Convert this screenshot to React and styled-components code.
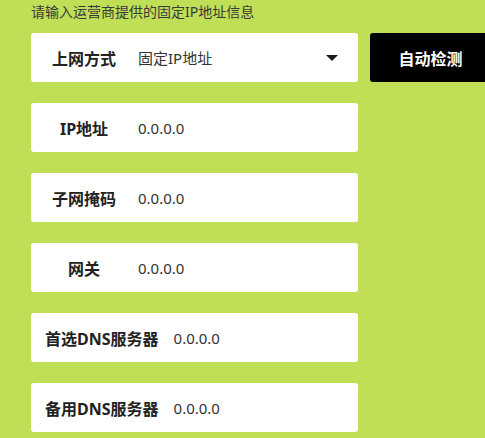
import React from "react"
import styled, { createGlobalStyle } from "styled-components"

const GlobalStyle = createGlobalStyle`
  html, body {
    margin: 0;
    padding: 0;
    overflow: hidden;
    background: #c0df57;
  }
  body {
    font-family: "Noto Sans", "Noto Sans CJK SC", sans-serif;
  }
`

const fields = [
  { label: "IP地址", value: "0.0.0.0" },
  { label: "子网掩码", value: "0.0.0.0" },
  { label: "网关", value: "0.0.0.0" },
  { label: "首选DNS服务器", value: "0.0.0.0" },
  { label: "备用DNS服务器", value: "0.0.0.0" },
]

const App = () => {
  return (
    <>
      <GlobalStyle />
      <Page>
        <Hint>请输入运营商提供的固定IP地址信息</Hint>
        <List>
          <Line>
            <Field>
              <Label>上网方式</Label>
              <Value>固定IP地址</Value>
              <Caret />
            </Field>
            <DetectButton>自动检测</DetectButton>
          </Line>
          {fields.map((f) => (
            <Line key={f.label}>
              <Field>
                <Label>{f.label}</Label>
                <Value>{f.value}</Value>
              </Field>
            </Line>
          ))}
        </List>
      </Page>
    </>
  )
}

export default App

const Page = styled.div`
  width: 485px;
  height: 438px;
  box-sizing: border-box;
  padding: 2px 0 0 31px;
  background: #c0df57;
  overflow: hidden;
`

const Hint = styled.div`
  font-size: 14px;
  line-height: 20px;
  color: #3a3a3a;
  margin-bottom: 11px;
  white-space: nowrap;
`

const List = styled.div`
  display: flex;
  flex-direction: column;
  gap: 21px;
`

const Line = styled.div`
  display: flex;
  gap: 12px;
`

const Field = styled.div`
  flex: none;
  width: 327px;
  height: 49px;
  box-sizing: border-box;
  background: #fff;
  border-radius: 3px;
  display: flex;
  align-items: center;
  padding: 0 20px 0 14px;
`

const Label = styled.span`
  min-width: 78px;
  text-align: center;
  font-size: 16px;
  font-weight: 700;
  color: #222;
  margin-right: 15px;
  white-space: nowrap;
`

const Value = styled.span`
  flex: 1;
  font-size: 15px;
  color: #333;
  white-space: nowrap;
`

const Caret = styled.span`
  width: 0;
  height: 0;
  border-left: 6px solid transparent;
  border-right: 6px solid transparent;
  border-top: 6px solid #1a1a1a;
`

const DetectButton = styled.button`
  flex: none;
  width: 121px;
  height: 49px;
  border: none;
  border-radius: 3px;
  background: #000;
  color: #fff;
  font-family: inherit;
  font-size: 16px;
  font-weight: 700;
  padding: 0;
  cursor: pointer;
`
